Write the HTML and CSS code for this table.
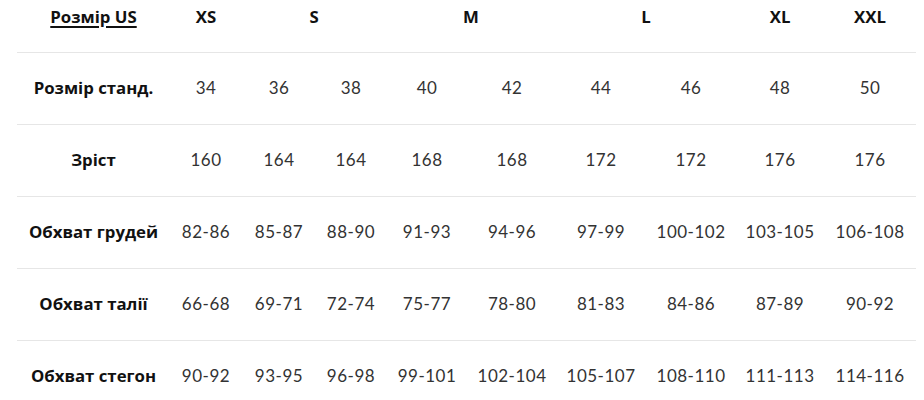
FILE: index.html
```html
<!DOCTYPE html>
<html lang="uk">
<head>
<meta charset="utf-8">
<title>Таблиця розмірів</title>
<link rel="stylesheet" href="styles.css">
</head>
<body>
<table class="sizes">
  <colgroup>
    <col class="c-label">
    <col class="c1"><col class="c2"><col class="c3"><col class="c4"><col class="c5">
    <col class="c6"><col class="c7"><col class="c8"><col class="c9">
  </colgroup>
  <thead>
    <tr>
      <th class="head-label"><span class="us">Розмір US</span></th>
      <th>XS</th>
      <th colspan="2">S</th>
      <th colspan="2">M</th>
      <th colspan="2">L</th>
      <th>XL</th>
      <th>XXL</th>
    </tr>
  </thead>
  <tbody>
    <tr>
      <th>Розмір станд.</th>
      <td>34</td><td>36</td><td>38</td><td>40</td><td>42</td><td>44</td><td>46</td><td>48</td><td>50</td>
    </tr>
    <tr>
      <th>Зріст</th>
      <td>160</td><td>164</td><td>164</td><td>168</td><td>168</td><td>172</td><td>172</td><td>176</td><td>176</td>
    </tr>
    <tr>
      <th>Обхват грудей</th>
      <td>82-86</td><td>85-87</td><td>88-90</td><td>91-93</td><td>94-96</td><td>97-99</td><td>100-102</td><td>103-105</td><td>106-108</td>
    </tr>
    <tr>
      <th>Обхват талії</th>
      <td>66-68</td><td>69-71</td><td>72-74</td><td>75-77</td><td>78-80</td><td>81-83</td><td>84-86</td><td>87-89</td><td>90-92</td>
    </tr>
    <tr>
      <th>Обхват стегон</th>
      <td>90-92</td><td>93-95</td><td>96-98</td><td>99-101</td><td>102-104</td><td>105-107</td><td>108-110</td><td>111-113</td><td>114-116</td>
    </tr>
  </tbody>
</table>
</body>
</html>
```

FILE: styles.css
```css
html, body {
  margin: 0;
  padding: 0;
  background: #fff;
}

body {
  font-family: "Open Sans", "Noto Sans", sans-serif;
  color: #1d1d1d;
}

.sizes {
  margin-left: 17px;
  border-collapse: collapse;
  table-layout: fixed;
  width: 899px;
}

.c-label { width: 153px; }
.c1 { width: 72px; }
.c2 { width: 74px; }
.c3 { width: 70px; }
.c4 { width: 82px; }
.c5 { width: 88px; }
.c6 { width: 90px; }
.c7 { width: 90px; }
.c8 { width: 88px; }
.c9 { width: 92px; }

.sizes th,
.sizes td {
  padding: 0;
  text-align: center;
  white-space: nowrap;
}

.sizes thead th {
  height: 52px;
  vertical-align: top;
  padding-top: 7px;
  box-sizing: border-box;
  font-size: 16.8px;
  line-height: 20px;
  font-weight: 700;
  color: #111;
  border-bottom: 1px solid #e6e6e6;
}

.us {
  text-decoration: underline;
  text-decoration-thickness: 1.5px;
  text-underline-offset: 3px;
}

.sizes tbody tr {
  height: 72px;
}

.sizes tbody th,
.sizes tbody td {
  vertical-align: middle;
  border-bottom: 1px solid #e6e6e6;
  line-height: 20px;
}

.sizes tbody th {
  font-size: 16.8px;
  font-weight: 700;
  color: #111;
}

.sizes tbody td {
  font-family: "Lato", "Open Sans", sans-serif;
  font-size: 17px;
  font-weight: 400;
  letter-spacing: 0.5px;
  color: #333;
}
```
